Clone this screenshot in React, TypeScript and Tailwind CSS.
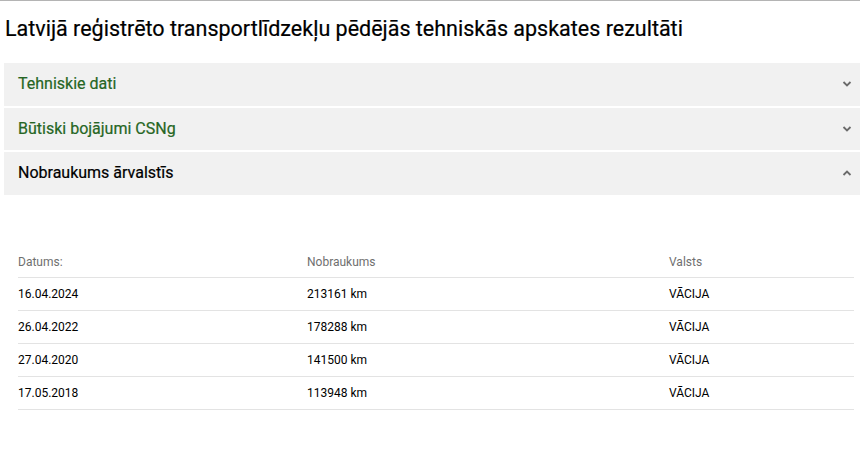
import { useState } from 'react';

const rows = [
  { date: '16.04.2024', km: '213161 km', country: 'VĀCIJA' },
  { date: '26.04.2022', km: '178288 km', country: 'VĀCIJA' },
  { date: '27.04.2020', km: '141500 km', country: 'VĀCIJA' },
  { date: '17.05.2018', km: '113948 km', country: 'VĀCIJA' },
];

function Chevron({ up }: { up?: boolean }) {
  return (
    <svg width="10" height="6" viewBox="0 0 10 6" className="text-[#6b6b6b]">
      <path
        d={up ? 'M1.5 5 L5 1.5 L8.5 5' : 'M1.5 1 L5 4.5 L8.5 1'}
        fill="none"
        stroke="currentColor"
        strokeWidth="1.8"
      />
    </svg>
  );
}

export default function App() {
  const [open, setOpen] = useState(2);
  const sections = ['Tehniskie dati', 'Būtiski bojājumi CSNg', 'Nobraukums ārvalstīs'];

  return (
    <div className="min-h-[467px] bg-white border-t border-[#b4b4b4] font-['Roboto',sans-serif]">
      <h1 className="px-[5px] pt-[14px] pb-[20px] text-[21.5px] leading-[28px] text-black [-webkit-text-stroke:0.2px_black]">
        Latvijā reģistrēto transportlīdzekļu pēdējās tehniskās apskates rezultāti
      </h1>

      <div className="pl-[4px] flex flex-col gap-[2px]">
        {sections.map((title, i) => (
          <button
            key={title}
            onClick={() => setOpen(open === i ? -1 : i)}
            className="h-[42.5px] bg-[#f1f1f1] flex items-center justify-between pl-[14px] pr-[8px] text-left"
          >
            <span
              className={`text-[16px] [-webkit-text-stroke:0.2px_currentColor] ${open === i ? 'text-black' : 'text-[#266624]'}`}
            >
              {title}
            </span>
            <Chevron up={open === i} />
          </button>
        ))}
      </div>

      {open === 2 && (
        <div className="pl-[18px] pr-[6px] pt-[52px]">
          <table className="w-full text-left text-[12px]">
            <thead>
              <tr className="border-b border-[#e3e3e3] text-[#6f6f6f]">
                <th className="font-normal h-[31px] w-[289px] align-middle">Datums:</th>
                <th className="font-normal w-[362px]">Nobraukums</th>
                <th className="font-normal">Valsts</th>
              </tr>
            </thead>
            <tbody className="text-black">
              {rows.map((r) => (
                <tr key={r.date} className="border-b border-[#e3e3e3]">
                  <td className="h-[33px]">{r.date}</td>
                  <td>{r.km}</td>
                  <td>{r.country}</td>
                </tr>
              ))}
            </tbody>
          </table>
        </div>
      )}
    </div>
  );
}
